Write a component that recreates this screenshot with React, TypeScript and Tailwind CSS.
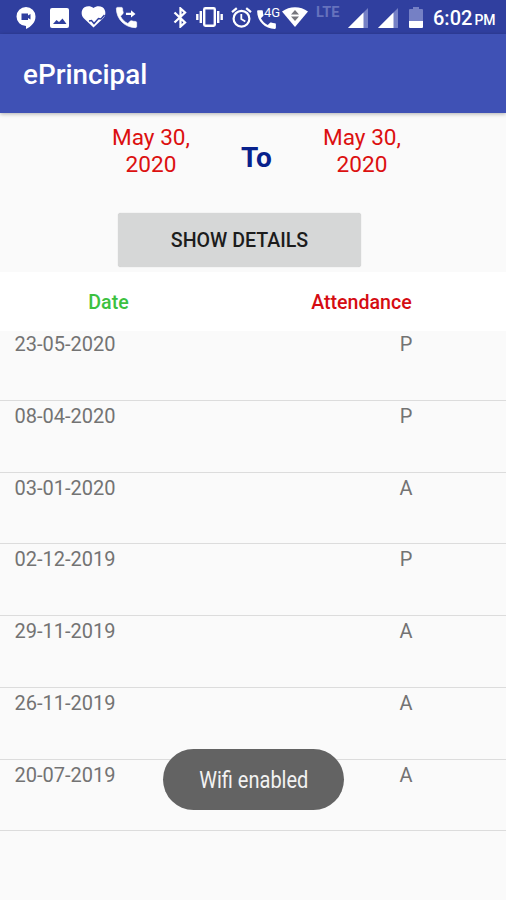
import type { ReactNode } from "react";
import { MdPhone } from "react-icons/md";

interface AttendanceRecord {
  date: string;
  status: "P" | "A";
}

const RECORDS: AttendanceRecord[] = [
  { date: "23-05-2020", status: "P" },
  { date: "08-04-2020", status: "P" },
  { date: "03-01-2020", status: "A" },
  { date: "02-12-2019", status: "P" },
  { date: "29-11-2019", status: "A" },
  { date: "26-11-2019", status: "A" },
  { date: "20-07-2019", status: "A" },
];

export default function App() {
  return (
    <div className="relative flex h-[900px] w-[506px] flex-col overflow-hidden bg-[#fafafa] font-['Roboto',sans-serif]">
      <StatusBar />
      <header className="z-10 flex h-[79px] shrink-0 items-center bg-[#3f51b5] pt-[3px] pl-[23px] shadow-[0_1px_4px_rgba(0,0,0,0.3)]">
        <h1 className="text-[27.8px] leading-none font-medium text-white">ePrincipal</h1>
      </header>

      <section className="flex h-[159px] shrink-0 flex-col">
        <div className="flex h-[100px] pt-[12px]">
          <DateField className="ml-[101px]">May 30, 2020</DateField>
          <div className="mt-[17px] w-[111px] text-center text-[28px] leading-8 font-bold text-[#08218c]">To</div>
          <DateField>May 30, 2020</DateField>
        </div>
        <button
          type="button"
          className="ml-[118px] h-[54px] w-[243px] rounded-[3px] bg-[#d6d7d7] pt-[2px] text-[19.6px] leading-none font-medium text-[#1c1c1c] shadow-[0_0_1px_rgba(0,0,0,0.25)]"
        >
          SHOW DETAILS
        </button>
      </section>

      <div className="flex h-[59px] shrink-0 items-center bg-white pt-[2px] text-[19.6px] leading-none font-medium">
        <div className="w-[217px] text-center text-[#3cc13f]">Date</div>
        <div className="w-[289px] text-center text-[#d50c12]">Attendance</div>
      </div>

      <ul className="-mt-[1.8px] shrink-0">
        {RECORDS.map((record) => (
          <li
            key={record.date}
            className="flex h-[71.75px] border-b border-[#dcdcdc] pt-[2.8px] text-[20px] leading-[24px] text-[#737373]"
          >
            <span className="w-[391px] pl-[14.5px]">{record.date}</span>
            <span className="w-[30px] text-center">{record.status}</span>
          </li>
        ))}
      </ul>

      <div className="absolute top-[749px] left-[163px] flex h-[61px] w-[181px] items-center justify-center rounded-full bg-[#636363] pt-[2px] text-[#f2f2f2]">
        <span className="scale-x-[0.87] text-[23px] leading-none whitespace-nowrap">Wifi enabled</span>
      </div>
    </div>
  );
}

function DateField({ className = "", children }: { className?: string; children: ReactNode }) {
  return (
    <div className={`w-[100px] text-center text-[22.6px] leading-[26.5px] text-[#dc1010] ${className}`}>
      {children}
    </div>
  );
}

function StatusBar() {
  return (
    <div className="flex h-[34px] shrink-0 items-center bg-[#303f9f] text-white">
      <HangoutsIcon />
      <PictureIcon />
      <HeartCheckIcon />
      <CallForwardIcon />
      <BluetoothIcon />
      <VibrateIcon />
      <AlarmIcon />
      <div className="relative ml-[2px] h-[25px] w-[26px] shrink-0">
        <MdPhone className="mt-[2px] h-[25px] w-[25px]" />
        <span className="absolute top-[1px] left-[10px] bg-[#303f9f] text-[13px] leading-[13px]">4G</span>
      </div>
      <WifiIcon />
      <span className="mb-[8px] ml-[8px] w-[25px] text-[14.5px] leading-none font-bold text-[#6672bd]">LTE</span>
      <SignalIcon className="ml-[7px]" />
      <SignalIcon className="ml-[10px]" />
      <BatteryIcon />
      <div className="mt-[2px] ml-[10px] flex items-baseline leading-none font-medium whitespace-nowrap">
        <span className="text-[20px]">6:02</span>
        <span className="ml-[2px] text-[14px]">PM</span>
      </div>
    </div>
  );
}

function HangoutsIcon() {
  return (
    <svg className="mt-[2px] ml-[16px] h-[22px] w-[20px] shrink-0" viewBox="0 0 20 22">
      <path d="M10 0a9.5 9.5 0 1 0 0 19v3c5-2.400 9.500-6.500 9.500-12.500A9.500 9.500 0 0 0 10 0z" fill="currentColor" />
      <path d="M5.500 6.500h6.500v2L14.500 7v5.500L12 11v2H5.500z" fill="#303f9f" />
    </svg>
  );
}

function PictureIcon() {
  return (
    <svg className="mt-[1px] ml-[14px] h-[20px] w-[19px] shrink-0" viewBox="0 0 19 20">
      <rect width="19" height="20" rx="2" fill="currentColor" />
      <path d="M3 16l3.500-4 2.500 2 3.500-3.500L16.500 16z" fill="#303f9f" />
    </svg>
  );
}

function HeartCheckIcon() {
  return (
    <svg className="ml-[12px] h-[22px] w-[25px] shrink-0" viewBox="0 0 25 22">
      <path
        d="M12.500 21.500L3 12.500C-.5 9 .1 3.500 3.500 1.300 6.500-.5 10 0 12.500 2c2.500-2 6-2.500 9-.700C24.900 3.500 25.500 9 22 12.500z"
        fill="currentColor"
      />
      <path d="M8 15l2.500-.500 2.500 3 4.500-5 2.500.500 3.500-4" fill="none" stroke="#303f9f" strokeWidth="1.500" />
    </svg>
  );
}

function CallForwardIcon() {
  return (
    <svg className="ml-[7px] h-[27px] w-[27px] shrink-0" viewBox="0 0 24 24" fill="currentColor">
      <path
        d="M6.620 10.790c1.440 2.830 3.760 5.140 6.590 6.590l2.200-2.200c.27-.27.670-.36 1.020-.24 1.120.37 2.330.57 3.570.57.550 0 1 .45 1 1V20c0 .55-.45 1-1 1C10.610 21 3 13.390 3 4c0-.55.450-1 1-1h3.500c.550 0 1 .45 1 1 0 1.250.200 2.450.570 3.570.110.350.030.740-.25 1.020z"
        stroke="currentColor"
        strokeWidth="0.600"
      />
      <path d="M11.500 7.800h4.500V5.500l4 3.300-4 3.300V9.800h-4.500z" />
    </svg>
  );
}

function BluetoothIcon() {
  return (
    <svg className="mt-px ml-[33px] h-[21px] w-[15px] shrink-0" viewBox="0 0 15 21" fill="none" stroke="currentColor">
      <path d="M1.500 5.500l10.500 10-4.500 4v-18l4.500 4-10.500 10" strokeWidth="2.300" />
    </svg>
  );
}

function VibrateIcon() {
  return (
    <svg className="ml-[8px] h-[20px] w-[27px] shrink-0" viewBox="0 0 27 20" fill="none" stroke="currentColor">
      <rect x="8.200" y="1.200" width="10.600" height="17.600" rx="1.200" strokeWidth="2.400" />
      <path d="M4.800 4v12M22.200 4v12M1.300 7v6M25.700 7v6" strokeWidth="2.400" />
    </svg>
  );
}

function AlarmIcon() {
  return (
    <svg className="ml-[8px] h-[21px] w-[21px] shrink-0" viewBox="0 0 21 21" fill="none" stroke="currentColor">
      <circle cx="10.500" cy="11.700" r="7.900" strokeWidth="2.200" />
      <path d="M1 5.200L5.800 1.200M20 5.200l-4.800-4" strokeWidth="2.200" />
      <path d="M10.300 7v5l4 2.500" strokeWidth="1.800" />
    </svg>
  );
}

function WifiIcon() {
  return (
    <svg className="ml-[2px] h-[20px] w-[26px] shrink-0" viewBox="0 0 26 20">
      <path d="M0 4.500C7.500-1.300 18.500-1.300 26 4.500L13 20z" fill="currentColor" />
      <path d="M13 3l4 4.500H9zM13 14l-4-4.500h8z" fill="#77777d" />
    </svg>
  );
}

function SignalIcon({ className }: { className: string }) {
  return (
    <svg className={`mt-[2px] h-[20px] w-[20px] shrink-0 ${className}`} viewBox="0 0 20 20">
      <path d="M20 0v20H0z" fill="#7580c5" />
      <path d="M15.500 4.500V20H0z" fill="currentColor" />
    </svg>
  );
}

function BatteryIcon() {
  return (
    <svg className="mt-[1px] ml-[11px] h-[21px] w-[14px] shrink-0" viewBox="0 0 14 21">
      <path d="M4 0h6v2h3q1 0 1 1v11H0V3q0-1 1-1h3z" fill="#7580c5" />
      <path d="M0 14h14v6q0 1-1 1H1q-1 0-1-1z" fill="currentColor" />
    </svg>
  );
}
